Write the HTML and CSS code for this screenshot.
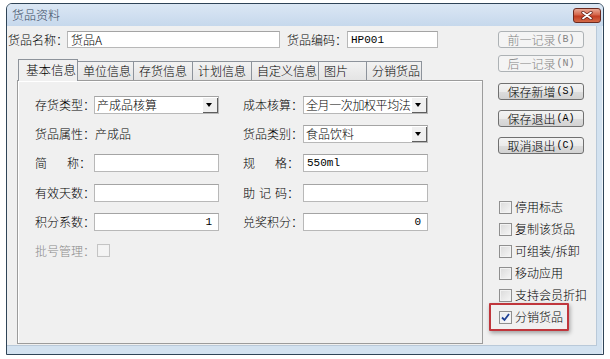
FILE: index.html
```html
<!DOCTYPE html>
<html lang="zh-CN">
<head>
    <meta charset="UTF-8">
    <title>货品资料</title>
    <link rel="stylesheet" href="styles.css">
</head>
<body>

    <div class="window">
        <div class="titlebar">
            <span class="title">货品资料</span>
            <span class="close">
                <svg width="12" height="9" viewBox="0 0 12 9"><path d="M2 1.5 L10 7.5 M10 1.5 L2 7.5" stroke="#5a1a12" stroke-width="3.2" stroke-linecap="round"/><path d="M2 1.5 L10 7.5 M10 1.5 L2 7.5" stroke="#fff" stroke-width="1.8" stroke-linecap="round"/></svg>
            </span>
        </div>

        <div class="frame">
            <div class="client">

                <!-- Левая часть: шапка и вкладки -->
                <div class="main">
                    <div class="head-row">
                        <span class="head-label">货品名称：</span>
                        <div class="field name-field">货品A</div>
                        <span class="head-label code-label">货品编码：</span>
                        <div class="field code-field mono">HP001</div>
                    </div>

                    <div class="tabs">
                        <span class="tab active" style="width:60px">基本信息</span>
                        <span class="tab" style="width:57px">单位信息</span>
                        <span class="tab" style="width:60px">存货信息</span>
                        <span class="tab" style="width:60px">计划信息</span>
                        <span class="tab" style="width:68px">自定义信息</span>
                        <span class="tab" style="width:49px">图片</span>
                        <span class="tab" style="width:56px">分销货品</span>
                    </div>

                    <div class="panel">
                        <div class="form">
                            <span class="lbl">存货类型：</span>
                            <div class="field combo"><span class="combo-text">产成品核算</span><span class="arrow"></span></div>
                            <span></span>
                            <span class="lbl">成本核算：</span>
                            <div class="field combo"><span class="combo-text tight">全月一次加权平均法</span><span class="arrow"></span></div>

                            <span class="lbl">货品属性：</span>
                            <span class="value">产成品</span>
                            <span></span>
                            <span class="lbl">货品类别：</span>
                            <div class="field combo"><span class="combo-text">食品饮料</span><span class="arrow"></span></div>

                            <span class="lbl">简<i class="sp2"></i>称：</span>
                            <div class="field"></div>
                            <span></span>
                            <span class="lbl">规<i class="sp2"></i>格：</span>
                            <div class="field mono">550ml</div>

                            <span class="lbl">有效天数：</span>
                            <div class="field"></div>
                            <span></span>
                            <span class="lbl">助<i class="sp1"></i>记<i class="sp1"></i>码：</span>
                            <div class="field"></div>

                            <span class="lbl">积分系数：</span>
                            <div class="field num mono">1</div>
                            <span></span>
                            <span class="lbl">兑奖积分：</span>
                            <div class="field num mono">0</div>

                            <span class="lbl disabled">批号管理：</span>
                            <span class="box off"></span>
                        </div>
                    </div>
                </div>

                <!-- Правая часть: кнопки и флажки -->
                <div class="side">
                    <div class="btn disabled">前一记录<span class="key">(B)</span></div>
                    <div class="btn disabled b2">后一记录<span class="key">(N)</span></div>
                    <div class="btn b3">保存新增<span class="key">(S)</span></div>
                    <div class="btn b4">保存退出<span class="key">(A)</span></div>
                    <div class="btn b4">取消退出<span class="key">(C)</span></div>

                    <div class="checks">
                        <div class="chk"><span class="box"></span>停用标志</div>
                        <div class="chk"><span class="box"></span>复制该货品</div>
                        <div class="chk"><span class="box"></span>可组装/拆卸</div>
                        <div class="chk"><span class="box"></span>移动应用</div>
                        <div class="chk"><span class="box"></span>支持会员折扣</div>
                        <div class="chk hl">
                            <span class="box on"><svg width="9" height="9" viewBox="0 0 9 9"><path d="M1 4.5 L3.5 7 L8 1" fill="none" stroke="#1c3f94" stroke-width="1.8"/></svg></span>分销货品
                        </div>
                    </div>
                </div>

            </div>
        </div>
    </div>

</body>
</html>
```

FILE: styles.css
```css
body {
    margin: 0;
    background: #fff;
    font-family: "Noto Sans CJK SC", "Noto Sans", sans-serif;
    font-size: 12px;
    font-weight: 300;
    line-height: 14px;
    color: #000;
}

.window {
    margin: 3px 0 0 6px;
    width: 598px;
    height: 352px;
    box-sizing: border-box;
    border: 1px solid #2f4457;
    border-radius: 6px 6px 0 0;
    background: #d3e2f0;
    display: flex;
    flex-direction: column;
    overflow: hidden;
}

.titlebar {
    height: 22px;
    flex: none;
    display: flex;
    align-items: center;
    justify-content: space-between;
    padding: 0 2px 0 5px;
    background: linear-gradient(#dbe7f4, #c6d8ec);
}

.title {
    color: #34465c;
}

.close {
    width: 28px;
    height: 15px;
    box-sizing: border-box;
    border: 1px solid #6b2a20;
    border-radius: 3px;
    background: linear-gradient(#e9a996, #d4654a 45%, #c23d22 55%, #d46a48);
    display: flex;
    align-items: center;
    justify-content: center;
}

.frame {
    flex: 1;
    display: flex;
    padding: 0 6px 8px 0;
    box-shadow: inset -1px 0 0 #eef4fa;
}

.client {
    flex: 1;
    display: flex;
    padding-top: 5px;
    background: #f0f0f0;
    border-right: 1px solid #b9c9d9;
    border-bottom: 1px solid #b9c9d9;
}

.main {
    width: 490px;
    flex: none;
}

.head-row {
    display: flex;
    align-items: center;
    height: 17px;
    padding-left: 1px;
}

.head-label {
    width: 59px;
    white-space: nowrap;
}

.code-label {
    margin-left: 7px;
    width: 60px;
}

.field {
    height: 18px;
    box-sizing: border-box;
    border: 1px solid #b8b8b8;
    border-top-color: #a4a4a4;
    background: #fff;
    padding-left: 3px;
    display: flex;
    align-items: center;
    white-space: nowrap;
}

.head-row .field {
    height: 17px;
}

.name-field {
    width: 213px;
}

.code-field {
    width: 91px;
}

.mono {
    font-family: "Liberation Mono", monospace;
    font-size: 11px;
    font-weight: 400;
}

.num {
    justify-content: flex-end;
    padding-right: 6px;
}

/* Вкладки */
.tabs {
    display: flex;
    align-items: flex-end;
    height: 21px;
    margin: 11px 0 0 11px;
    position: relative;
    z-index: 1;
}

.tab {
    height: 19px;
    box-sizing: border-box;
    border: 1px solid #8d939b;
    border-bottom: none;
    margin-right: -1px;
    padding: 2px 0 0 5px;
    background: linear-gradient(#f2f2f2, #e4e4e4);
    white-space: nowrap;
}

.tab.active {
    height: 22px;
    margin-bottom: -1px;
    padding: 3px 0 0 7px;
    background: #f0f0f0;
    font-size: 12.5px;
}

.panel {
    margin-left: 10px;
    width: 466px;
    height: 264px;
    box-sizing: border-box;
    border: 1px solid #9c9c9c;
    box-shadow: inset 1px 1px 0 #fff;
}

.form {
    display: grid;
    grid-template-columns: 59px 125px 24px 60px 125px;
    grid-template-rows: 28px 29px 30px 29px 29px 29px;
    align-items: center;
    padding: 10px 0 0 17px;
}

.lbl {
    white-space: nowrap;
}

.lbl i {
    display: inline-block;
}

.sp2 {
    width: 20px;
}

.sp1 {
    width: 4px;
}

.disabled {
    color: #8a8a8a;
}

.value {
    padding-left: 1px;
}

.combo {
    padding: 0 0 0 2px;
    justify-content: space-between;
}

.tight {
    letter-spacing: -0.4px;
}

.arrow {
    width: 16px;
    height: 16px;
    flex: none;
    box-sizing: border-box;
    background: #f0f0f0;
    box-shadow: inset 1px 1px 0 #fff, inset -1px -1px 0 #5e5e5e;
    position: relative;
}

.arrow::after {
    content: "";
    position: absolute;
    left: 4px;
    top: 6px;
    border-left: 3.5px solid transparent;
    border-right: 3.5px solid transparent;
    border-top: 4px solid #000;
}

/* Флажки */
.box {
    width: 13px;
    height: 13px;
    flex: none;
    box-sizing: border-box;
    border: 1px solid #8f8f8f;
    background: linear-gradient(135deg, #dadada, #f6f6f6);
    box-shadow: inset 0 0 0 1px #f2f2f2;
    display: flex;
    align-items: center;
    justify-content: center;
}

.box.off {
    margin-left: 3px;
    border-color: #c4c4c4;
    background: #f4f4f4;
}

.box.on {
    background: linear-gradient(135deg, #e4e8ee, #fbfcfd);
}

/* Правая колонка */
.side {
    flex: 1;
    padding-left: 1px;
}

.btn {
    width: 86px;
    height: 17px;
    box-sizing: border-box;
    border: 1px solid #707070;
    border-radius: 3px;
    background: linear-gradient(#f3f3f3, #ebebeb 50%, #dddddd 51%, #d2d2d2);
    display: flex;
    align-items: center;
    justify-content: center;
    white-space: nowrap;
    font-size: 12px;
}

.btn.disabled {
    border-color: #adb2b5;
    background: #f4f4f4;
    color: #838383;
}

.b2 {
    margin-top: 7px;
}

.b3 {
    margin-top: 11px;
}

.b4 {
    margin-top: 10px;
}

.key {
    font-family: "Liberation Mono", monospace;
    font-size: 10px;
    font-weight: 400;
    margin-left: 1px;
}

.checks {
    margin-top: 42px;
}

.chk {
    height: 22px;
    display: flex;
    align-items: center;
    white-space: nowrap;
    padding-left: 1px;
}

.chk .box {
    margin-right: 3px;
}

.chk.hl {
    position: relative;
}

.chk.hl::after {
    content: "";
    position: absolute;
    left: -9px;
    top: -3px;
    width: 80px;
    height: 28px;
    box-sizing: border-box;
    border: 2px solid #c0363c;
    border-radius: 1px;
    box-shadow: 1px 2px 4px rgba(0, 0, 0, 0.35);
}
```
